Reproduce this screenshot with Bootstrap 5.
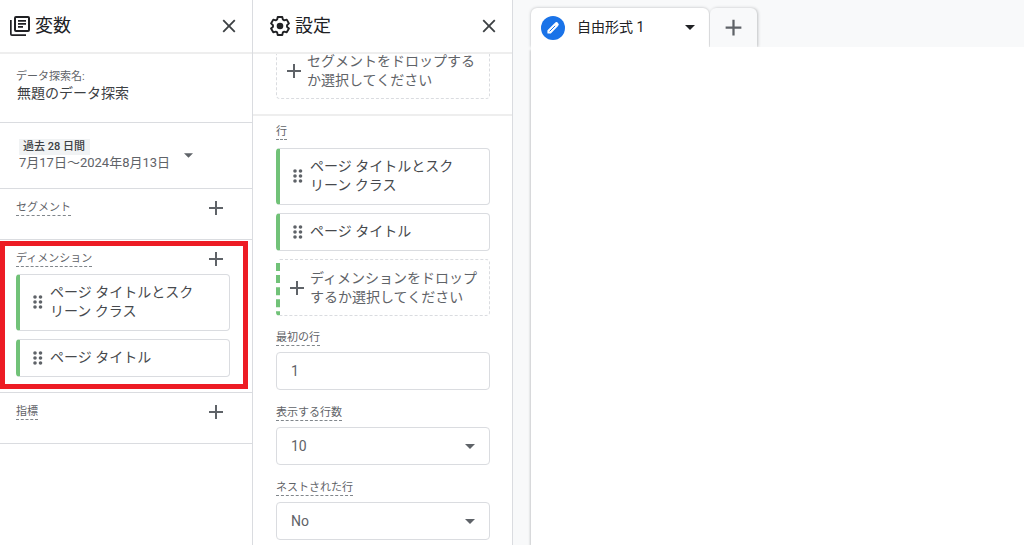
<!DOCTYPE html>
<html lang="ja">
<head>
<meta charset="utf-8">
<meta name="viewport" content="width=device-width, initial-scale=1">
<title>無題のデータ探索</title>
<link href="https://cdn.jsdelivr.net/npm/bootstrap@5.3.0/dist/css/bootstrap.min.css" rel="stylesheet">
<style>
body { font-family: Roboto, "Noto Sans CJK JP", sans-serif; font-size: 14px; line-height: 19px; color: #3c4043; background: #f8f9fa; }
button { background: none; border: 0; padding: 0; color: #5f6368; }
svg { display: block; fill: currentColor; }
.side-panel { background: #fff; border-right: 1px solid #dadce0; }
.vars { flex: 0 0 253px; }
.settings { flex: 0 0 260px; }
.panel-head { height: 54px; border-bottom: 2px solid #eeeeee; background: #fff; z-index: 1; color: #202124; flex: none; padding-right: 12px; }
.vars .panel-head { padding-left: 10px; }
.settings .panel-head { padding-left: 17px; }
.panel-head h2 { font-size: 18px; line-height: 24px; font-weight: 400; margin: 0 0 0 5px; }
.panel-head button { color: #3c4043; }
.sec { border-bottom: 1px solid #dadce0; padding: 12px 22px 0 16px; }
.hint { font-size: 11px; line-height: 14px; color: #5f6368; border-bottom: 1px dashed #80868b; display: block; width: fit-content; align-self: flex-start; white-space: nowrap; }
.tiny { font-size: 11px; line-height: 15px; color: #5f6368; }
.name-sec { height: 69px; padding-top: 15px; }
.name-box { border: 0; padding: 0 0 0 1px; width: 100%; height: 19px; color: #3c4043; background: none; }
.date-sec { height: 66px; padding: 16px 22px 0 19px; }
.range-chip { background: #f1f3f4; font-size: 11px; line-height: 16px; padding: 0 5px 0 4px; font-weight: 500; color: #3c4043; }
.range-text { font-size: 13px; line-height: 16px; color: #5f6368; }
.range-btn { gap: 14px; }
.seg-sec { height: 51px; }
.dim-sec { padding-bottom: 15px; }
.dim-head { margin-bottom: 7px; }
.add-btn { width: 24px; height: 24px; margin: -5px 2px -8px 0; }
.chip-card { width: 214px; min-height: 38px; border: 1px solid #dadce0; border-left: 4px solid #71c278; border-radius: 4px; padding: 8px 30px 9px 13px; gap: 7px; background: #fff; text-align: left; color: #46494d; }
.grip { color: #5f6368; flex: none; }
.drop { width: 214px; min-height: 57px; border: 1px dashed #dadce0; border-radius: 4px; padding: 8px 0 8px 5px; color: #5f6368; gap: 1px; text-align: left; }
.drop.dim { border-left: 4px dashed #71c278; }
.drop span { white-space: nowrap; }
.seg-drop { margin-top: -12px; padding: 0 22px 15px 23px; border-bottom: 2px solid #eeeeee; }
.rows { padding: 9px 22px 0 23px; }
.fields { margin-top: 15px; gap: 16px; }
.field { gap: 6px; }
.box { width: 214px; height: 38px; border: 1px solid #dadce0; border-radius: 4px; padding: 0 14px; background: #fff; color: #5f6368; appearance: none; font-size: 14px; }
.select-wrap .caret { position: absolute; right: 15px; top: 17px; color: #5f6368; pointer-events: none; }
.callout-frame { inset: 1px 4px 3px 0; border: 5px solid #ed1c24; pointer-events: none; }
.workspace { padding: 8px 0 0 18px; min-width: 0; }
.tab-main { width: 178px; height: 39px; background: #fff; border-radius: 6px 6px 0 0; box-shadow: 0 0 3px rgba(60,64,67,.35); padding: 0 14px 0 10px; color: #202124; }
.tab-add { width: 47px; height: 39px; margin-left: 1px; border-radius: 6px 6px 0 0; box-shadow: 1px 0 3px rgba(60,64,67,.3); background: #f8f9fa; }
.sheet { background: #fff; z-index: 1; box-shadow: -2px 2px 2px -1px rgba(60,64,67,.25); }
</style>
</head>
<body>
<svg class="d-none" aria-hidden="true">
  <symbol id="plus" viewBox="0 0 24 24"><path d="M19 13h-6v6h-2v-6H5v-2h6V5h2v6h6z"/></symbol>
  <symbol id="close" viewBox="0 0 24 24"><path d="M19 6.400 17.600 5 12 10.600 6.400 5 5 6.400 10.600 12 5 17.600 6.400 19 12 13.400 17.600 19 19 17.600 13.400 12z"/></symbol>
  <symbol id="caret" viewBox="0 0 10 5"><path d="M0 0h10L5 5z"/></symbol>
  <symbol id="grip" viewBox="0 0 10 14"><circle cx="2" cy="2" r="1.800"/><circle cx="7.500" cy="2" r="1.800"/><circle cx="2" cy="7" r="1.800"/><circle cx="7.500" cy="7" r="1.800"/><circle cx="2" cy="12" r="1.800"/><circle cx="7.500" cy="12" r="1.800"/></symbol>
</svg>
<div class="d-flex vh-100 overflow-hidden">
  <aside class="side-panel vars">
    <header class="panel-head d-flex align-items-center">
      <svg width="20" height="20" viewBox="0 0 20 20"><path fill-rule="evenodd" d="M6 0h12a2 2 0 0 1 2 2v12a2 2 0 0 1-2 2H6a2 2 0 0 1-2-2V2a2 2 0 0 1 2-2zm0 2v12h12V2zM8 4h8v1.700H8zm0 3h8v1.700H8zm0 3h5v1.700H8zM0 4h1.700v14.300H16V20H2a2 2 0 0 1-2-2z"/></svg>
      <h2>変数</h2>
      <button class="ms-auto" type="button" aria-label="閉じる"><svg width="22" height="22"><use href="#close"/></svg></button>
    </header>
    <section class="sec name-sec">
      <label class="tiny d-block" for="exploration">データ探索名:</label>
      <input class="name-box d-block" id="exploration" type="text" value="無題のデータ探索">
    </section>
    <section class="sec date-sec">
      <button class="range-btn d-flex align-items-center text-start" type="button">
        <span class="d-flex flex-column align-items-start"><span class="range-chip">過去 28 日間</span><span class="range-text">7月17日～2024年8月13日</span></span>
        <svg width="9" height="5"><use href="#caret"/></svg>
      </button>
    </section>
    <section class="sec seg-sec d-flex justify-content-between align-items-start">
      <span class="hint">セグメント</span>
      <button class="add-btn" type="button" aria-label="セグメントを追加"><svg width="24" height="24"><use href="#plus"/></svg></button>
    </section>
    <section class="sec dim-sec position-relative">
      <div class="dim-head d-flex justify-content-between">
        <span class="hint">ディメンション</span>
        <button class="add-btn" type="button" aria-label="ディメンションを追加"><svg width="24" height="24"><use href="#plus"/></svg></button>
      </div>
      <div class="d-flex flex-column gap-2">
        <button class="chip-card d-flex align-items-center" type="button"><svg class="grip" width="10" height="14"><use href="#grip"/></svg><span>ページ タイトルとスク<br>リーン クラス</span></button>
        <button class="chip-card d-flex align-items-center" type="button"><svg class="grip" width="10" height="14"><use href="#grip"/></svg><span>ページ タイトル</span></button>
      </div>
      <div class="callout-frame position-absolute"></div>
    </section>
    <section class="sec seg-sec d-flex justify-content-between align-items-start">
      <span class="hint">指標</span>
      <button class="add-btn" type="button" aria-label="指標を追加"><svg width="24" height="24"><use href="#plus"/></svg></button>
    </section>
  </aside>

  <aside class="side-panel settings">
    <header class="panel-head d-flex align-items-center position-relative">
      <svg width="20" height="20" viewBox="0 0 20 20"><path d="M7.600 1h4.800l.6 2.700 1.500.9 2.600-.8 2.300 4-2 1.900v1.600l2 1.900-2.300 4-2.600-.8-1.500.9-.6 2.700H7.600L7 17.300l-1.500-.9-2.600.8-2.300-4 2-1.900V9.700l-2-1.900 2.300-4 2.600.8L7 3.700z" fill="none" stroke="currentColor" stroke-width="2" stroke-linejoin="round" transform="translate(.5 0) scale(.95)"/><circle cx="10" cy="10" r="3.300"/></svg>
      <h2>設定</h2>
      <button class="ms-auto" type="button" aria-label="閉じる"><svg width="22" height="22"><use href="#close"/></svg></button>
    </header>
    <section class="seg-drop">
      <button class="drop d-flex align-items-center" type="button"><svg width="24" height="24"><use href="#plus"/></svg><span>セグメントをドロップする<br>か選択してください</span></button>
    </section>
    <section class="rows">
      <div class="hint mb-2">行</div>
      <div class="d-flex flex-column gap-2">
        <button class="chip-card d-flex align-items-center" type="button"><svg class="grip" width="10" height="14"><use href="#grip"/></svg><span>ページ タイトルとスク<br>リーン クラス</span></button>
        <button class="chip-card d-flex align-items-center" type="button"><svg class="grip" width="10" height="14"><use href="#grip"/></svg><span>ページ タイトル</span></button>
        <button class="drop dim d-flex align-items-center" type="button"><svg width="24" height="24"><use href="#plus"/></svg><span>ディメンションをドロップ<br>するか選択してください</span></button>
      </div>
      <div class="fields d-flex flex-column">
        <div class="field d-flex flex-column">
          <label class="hint" for="first-row">最初の行</label>
          <input class="box" id="first-row" type="text" value="1">
        </div>
        <div class="field d-flex flex-column">
          <label class="hint" for="row-count">表示する行数</label>
          <div class="select-wrap position-relative"><select class="box d-block" id="row-count"><option>10</option><option>25</option></select><svg class="caret" width="10" height="5"><use href="#caret"/></svg></div>
        </div>
        <div class="field d-flex flex-column">
          <label class="hint" for="nested">ネストされた行</label>
          <div class="select-wrap position-relative"><select class="box d-block" id="nested"><option>No</option><option>Yes</option></select><svg class="caret" width="10" height="5"><use href="#caret"/></svg></div>
        </div>
      </div>
    </section>
  </aside>

  <main class="workspace flex-grow-1 d-flex flex-column">
    <div class="d-flex">
      <button class="tab-main d-flex align-items-center" type="button">
        <svg width="24" height="24" viewBox="0 0 24 24"><circle cx="12" cy="12" r="12" fill="#1a73e8"/><path d="M7 17v-2.400l7.300-7.300a1.500 1.500 0 0 1 2.300 2.300L9.400 17z" fill="#fff" stroke="#fff" stroke-width="1.200" stroke-linejoin="round"/><path d="M8.600 15.400l5.600-5.600" stroke="#1a73e8" stroke-width="1"/></svg>
        <span class="ms-2 ps-1">自由形式 1</span>
        <svg class="ms-auto" width="10" height="5"><use href="#caret"/></svg>
      </button>
      <button class="tab-add d-flex align-items-center justify-content-center" type="button" aria-label="タブを追加"><svg width="27" height="27"><use href="#plus"/></svg></button>
    </div>
    <div class="sheet flex-grow-1 position-relative"></div>
  </main>
</div>
<script src="https://cdn.jsdelivr.net/npm/bootstrap@5.3.0/dist/js/bootstrap.bundle.min.js"></script>
</body>
</html>
